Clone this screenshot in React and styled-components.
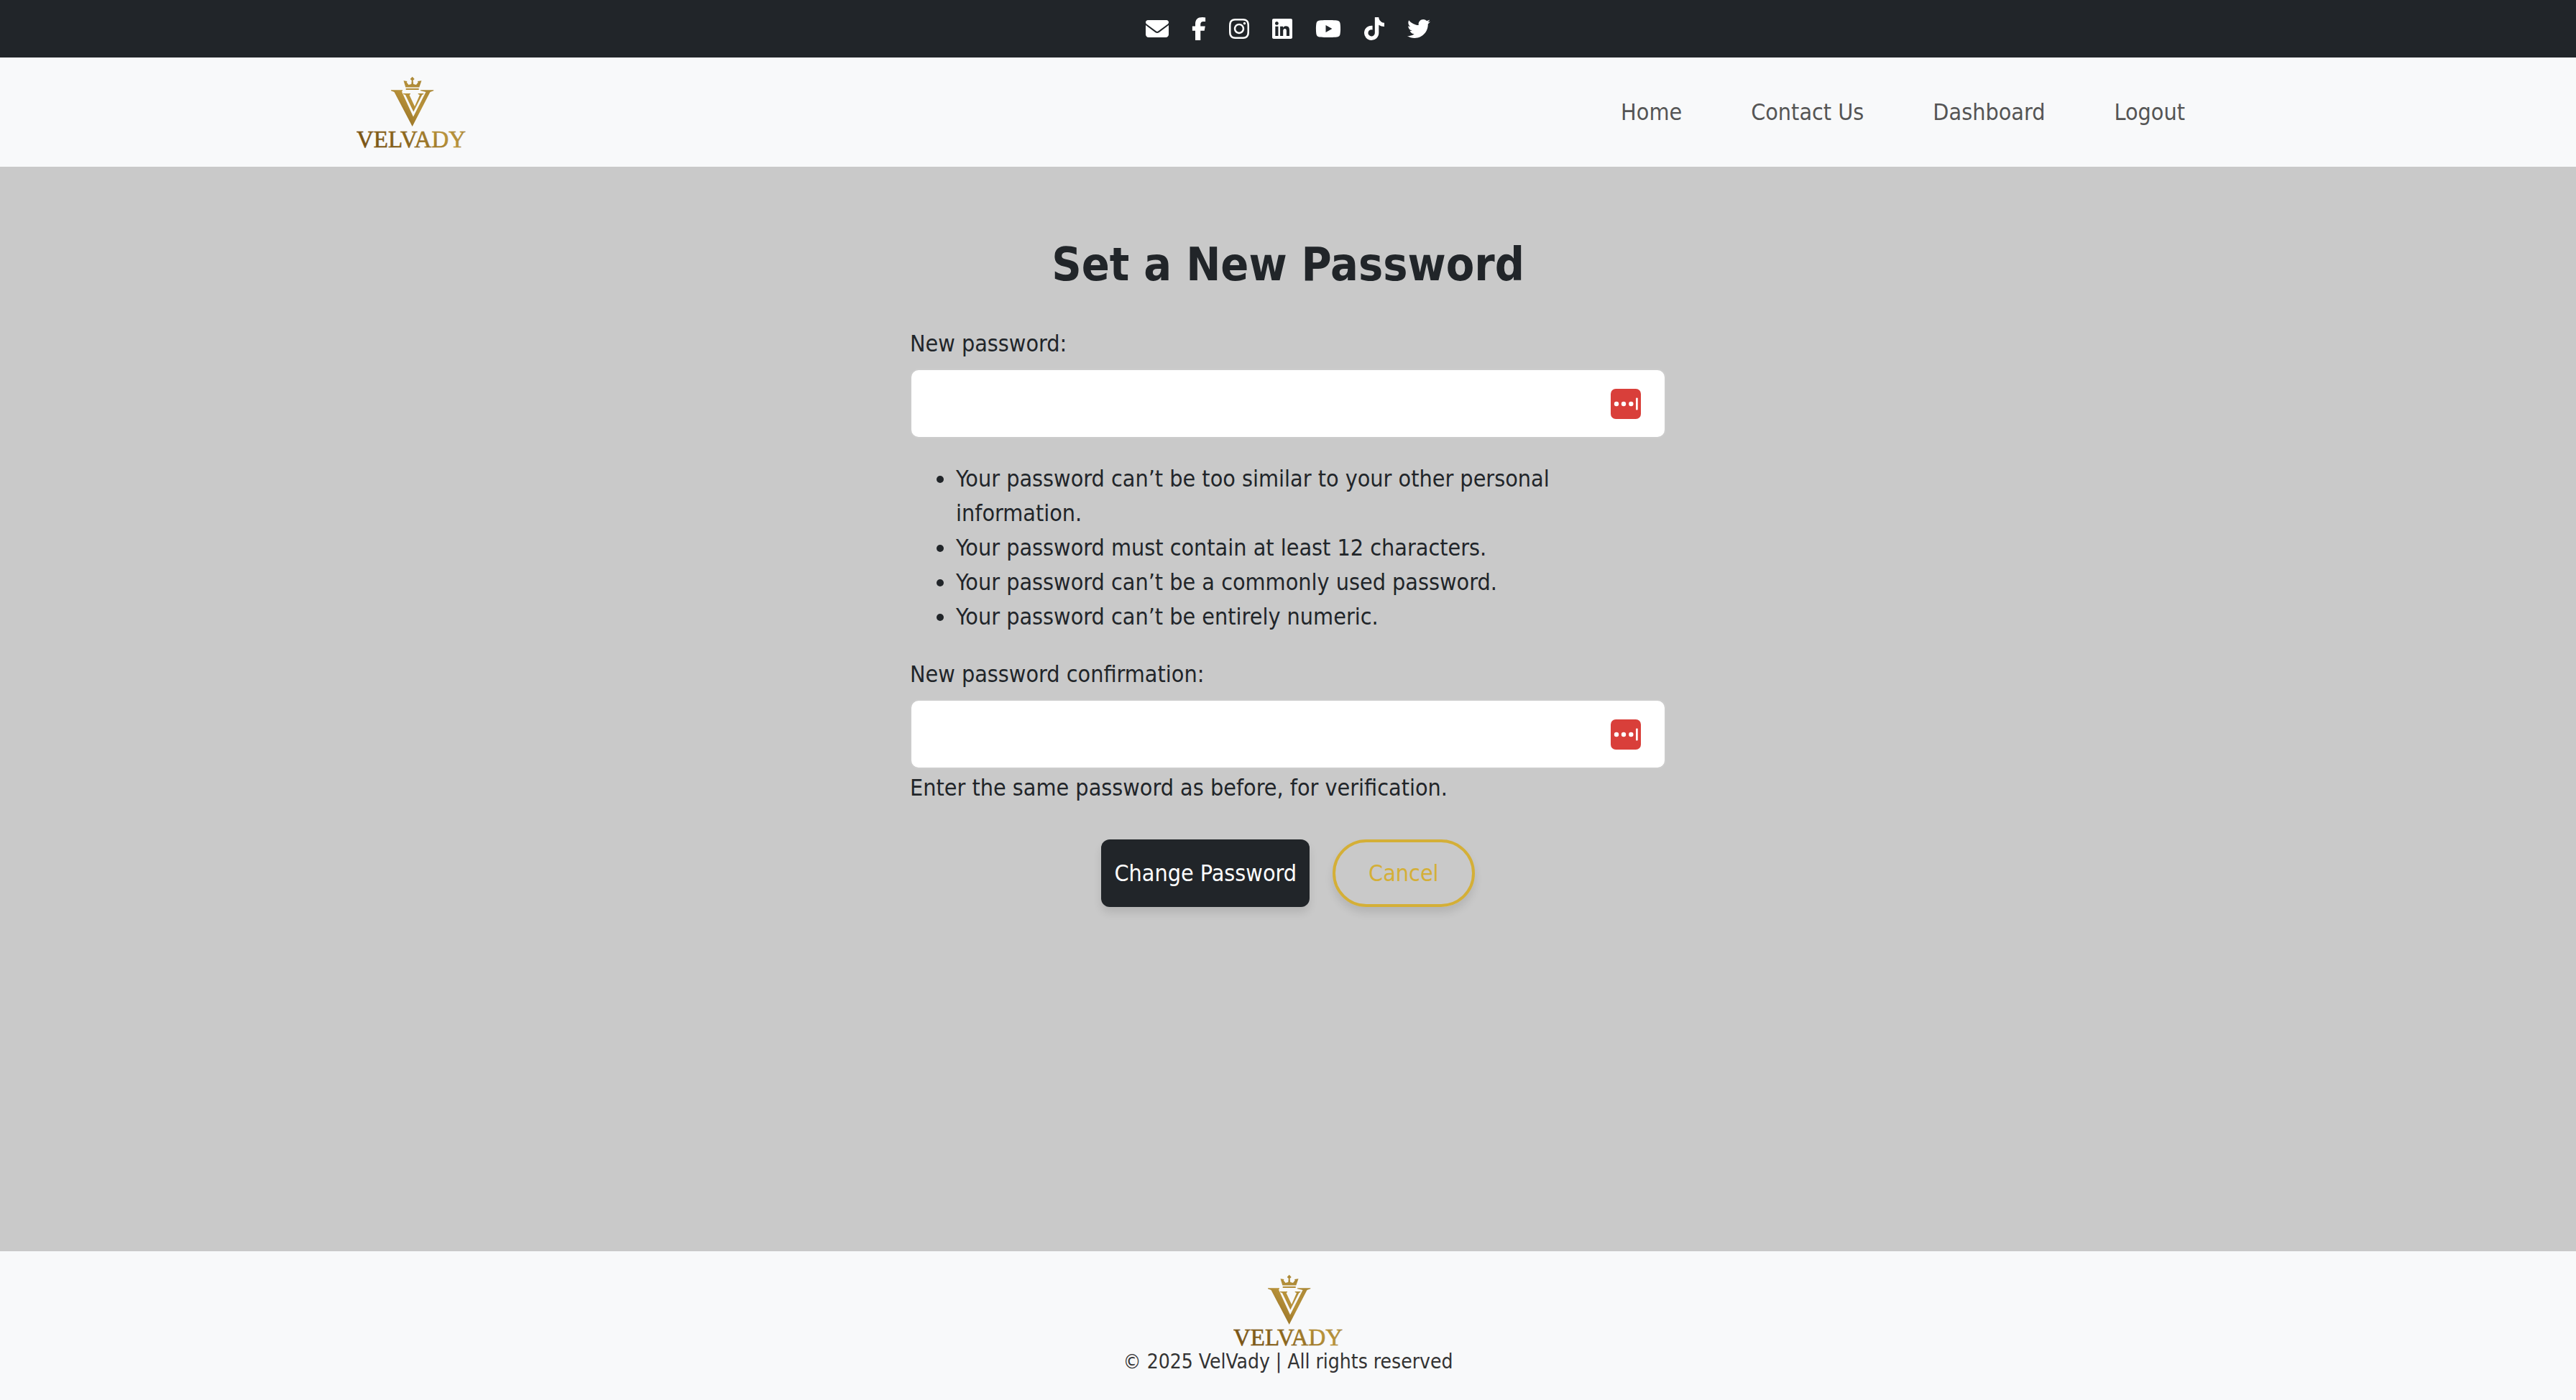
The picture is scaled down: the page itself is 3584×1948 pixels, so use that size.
import React from "react";
import styled, { createGlobalStyle } from "styled-components";
import {
  FaEnvelope,
  FaFacebookF,
  FaInstagram,
  FaLinkedin,
  FaYoutube,
  FaTiktok,
  FaTwitter,
} from "react-icons/fa6";

const GlobalStyle = createGlobalStyle`
  *, *::before, *::after { box-sizing: border-box; }
  body {
    margin: 0;
    font-family: Tahoma, "DejaVu Sans Condensed", "DejaVu Sans", sans-serif;
    font-size: 32px;
    line-height: 48px;
    color: #212529;
    background: #c9c9c9;
  }
`;

const Page = styled.div`
  min-height: 100vh;
  display: flex;
  flex-direction: column;
`;

const SocialBar = styled.div`
  display: flex;
  justify-content: center;
  align-items: center;
  gap: 32px;
  height: 80px;
  background: #212529;
`;

const SocialLink = styled.a`
  display: flex;
  color: #fff;
  svg {
    width: ${(p) => p.$width}px;
    height: 32px;
  }
`;

const Header = styled.header`
  background: #f8f9fa;
`;

const HeaderInner = styled.div`
  display: flex;
  justify-content: space-between;
  align-items: center;
  max-width: 2640px;
  height: 152px;
  margin: 0 auto;
  padding: 0 24px;
`;

const Nav = styled.nav`
  display: flex;
`;

const NavLink = styled.a`
  padding: 16px 48px;
  color: #555;
  text-decoration: none;
`;

const Main = styled.main`
  flex: 1;
  display: flex;
  flex-direction: column;
  align-items: center;
  padding: 96px 24px;
`;

const Title = styled.h1`
  margin: 0 0 46px;
  font-size: 64px;
  line-height: 80px;
  font-weight: 700;
`;

const Form = styled.form`
  width: 100%;
  max-width: 1052px;
`;

const Label = styled.label`
  display: block;
  margin-bottom: 11px;
`;

const InputWrap = styled.div`
  position: relative;
`;

const Input = styled.input`
  display: block;
  width: 100%;
  height: 97px;
  padding: 12px 96px 12px 24px;
  border: 2px solid #ccc;
  border-radius: 12px;
  background: #fff;
  font: inherit;
  color: inherit;
  outline: none;
`;

const FillButton = styled.button`
  position: absolute;
  top: 28px;
  right: 35px;
  display: flex;
  padding: 0;
  border: 0;
  background: none;
`;

const Rules = styled.ul`
  margin: 32px 0;
  padding-left: 64px;
`;

const HelpText = styled.p`
  margin: 2px 0 0;
`;

const Actions = styled.div`
  display: flex;
  justify-content: center;
  gap: 32px;
  margin-top: 48px;
`;

const Button = styled.button`
  height: 94px;
  padding: 0 18px;
  border: 0;
  border-radius: 12px;
  background: #212529;
  color: #fff;
  font: inherit;
  box-shadow: 0 8px 12px rgba(0, 0, 0, 0.1);
`;

const OutlineButton = styled(Button)`
  padding: 0 46px;
  border: 4px solid #d4af37;
  border-radius: 50px;
  background: transparent;
  color: #d4af37;
`;

const Footer = styled.footer`
  display: flex;
  flex-direction: column;
  align-items: center;
  padding: 24px 24px 39px;
  background: #f8f9fa;
  color: #333;
`;

const Copyright = styled.p`
  margin: 0;
  font-size: 28px;
  line-height: 28px;
`;

const Brand = styled.svg`
  display: block;
  width: 152px;
  height: 116px;
`;

function Logo({ id }) {
  return (
    <Brand viewBox="0 -8 152 116" role="img" aria-label="Velvady">
      <defs>
        <linearGradient id={id} x1="20" y1="100" x2="120" y2="0" gradientUnits="userSpaceOnUse">
          <stop offset="0" stopColor="#7a5516" />
          <stop offset="0.35" stopColor="#8f6a20" />
          <stop offset="0.6" stopColor="#b8923a" />
          <stop offset="1" stopColor="#a08034" />
        </linearGradient>
      </defs>
      <g fill={`url(#${id})`}>
        <path d="M65.500 6.300 L70.500 7 L69.800 8.500 L72.500 12 L76.300 11 L76.800 6 L74.700 4 L77.700 0.800 L80.700 4 L78.600 6 L79.200 11 L83 12 L85.700 8.500 L85 7 L90.500 6.300 L87.300 15.500 H68.300 Z" />
        <path d="M68.700 17 H86.700 V19 H68.700 Z" />
        <path d="M48 19.300 H64 V20.300 L63 21.500 L79 56.500 L96.500 22 L89 20.300 V19.300 H107.300 V20.300 L102.500 22 L77.700 70 L52.500 22 L48 20.300 Z" />
        <path d="M65 24 H75 V25 L73.500 26 L81 42 L88 26 L85.700 25 V24 H93.300 V25 L91.300 26 L79.300 49.500 L68 26 L65 25 Z" />
        <text
          x="76"
          y="99"
          textAnchor="middle"
          fontFamily="Liberation Serif, Times New Roman, serif"
          fontSize="33"
          stroke={`url(#${id})`}
          strokeWidth="0.6"
        >
          VELVADY
        </text>
      </g>
    </Brand>
  );
}

function FillIcon() {
  return (
    <svg width="42" height="42" viewBox="0 0 42 42" aria-hidden="true">
      <rect width="42" height="42" rx="7" fill="#d93f3a" />
      <g fill="#fff">
        <circle cx="8" cy="21" r="3.200" />
        <circle cx="18" cy="21" r="3.200" />
        <circle cx="28.300" cy="21" r="3.200" />
        <rect x="35" y="12.500" width="2.700" height="17" rx="1" />
      </g>
    </svg>
  );
}

function PasswordField({ id, label, describedBy }) {
  return (
    <>
      <Label htmlFor={id}>{label}</Label>
      <InputWrap>
        <Input id={id} type="password" aria-describedby={describedBy} />
        <FillButton type="button" aria-label="Fill password">
          <FillIcon />
        </FillButton>
      </InputWrap>
    </>
  );
}

const socials = [
  { name: "Email", Icon: FaEnvelope, width: 32 },
  { name: "Facebook", Icon: FaFacebookF, width: 20 },
  { name: "Instagram", Icon: FaInstagram, width: 28 },
  { name: "LinkedIn", Icon: FaLinkedin, width: 28 },
  { name: "YouTube", Icon: FaYoutube, width: 36 },
  { name: "TikTok", Icon: FaTiktok, width: 28 },
  { name: "Twitter", Icon: FaTwitter, width: 32 },
];

const links = ["Home", "Contact Us", "Dashboard", "Logout"];

const rules = [
  "Your password can’t be too similar to your other personal information.",
  "Your password must contain at least 12 characters.",
  "Your password can’t be a commonly used password.",
  "Your password can’t be entirely numeric.",
];

export default function App() {
  return (
    <Page>
      <GlobalStyle />
      <SocialBar>
        {socials.map(({ name, Icon, width }) => (
          <SocialLink key={name} href="#" aria-label={name} $width={width}>
            <Icon />
          </SocialLink>
        ))}
      </SocialBar>
      <Header>
        <HeaderInner>
          <a href="#" aria-label="Velvady home">
            <Logo id="gold-header" />
          </a>
          <Nav>
            {links.map((text) => (
              <NavLink key={text} href="#">
                {text}
              </NavLink>
            ))}
          </Nav>
        </HeaderInner>
      </Header>
      <Main>
        <Title>Set a New Password</Title>
        <Form>
          <PasswordField id="new-password" label="New password:" describedBy="rules" />
          <Rules id="rules">
            {rules.map((rule) => (
              <li key={rule}>{rule}</li>
            ))}
          </Rules>
          <PasswordField
            id="confirm-password"
            label="New password confirmation:"
            describedBy="confirm-help"
          />
          <HelpText id="confirm-help">
            Enter the same password as before, for verification.
          </HelpText>
          <Actions>
            <Button type="submit">Change Password</Button>
            <OutlineButton type="button">Cancel</OutlineButton>
          </Actions>
        </Form>
      </Main>
      <Footer>
        <Logo id="gold-footer" />
        <Copyright>© 2025 VelVady | All rights reserved</Copyright>
      </Footer>
    </Page>
  );
}
